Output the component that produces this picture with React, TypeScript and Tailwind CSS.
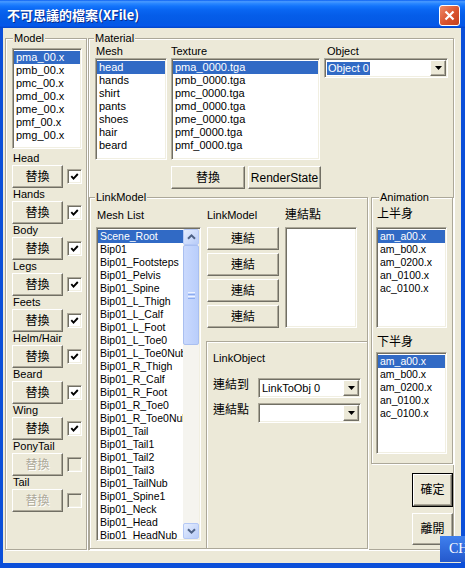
import React from "react";

const FONT = "font-['Liberation_Sans','Noto_Sans_CJK_TC',sans-serif]";
const CJK = "font-['Noto_Sans_CJK_TC','Liberation_Sans',sans-serif]";
const raised =
  "bg-[#ece9d8] border border-t-white border-l-white border-b-[#716f64] border-r-[#716f64] shadow-[inset_-1px_-1px_0_#aca899]";
const sunken =
  "border border-t-[#aca899] border-l-[#aca899] border-b-white border-r-white shadow-[inset_1px_1px_0_#716f64,inset_-1px_-1px_0_#f1efe2]";
const etched =
  "border border-[#aca899] shadow-[inset_1px_1px_0_#ffffff,1px_1px_0_#ffffff]";

function Group({
  label,
  labelLeft,
  className,
  children,
}: {
  label: string;
  labelLeft: string;
  className: string;
  children?: React.ReactNode;
}) {
  return (
    <div className={`relative ${etched} ${className}`}>
      <span
        className={`absolute top-[-7px] ${labelLeft} bg-[#ece9d8] px-[1px] text-[11px] leading-[13px] whitespace-nowrap`}
      >
        {label}
      </span>
      {children}
    </div>
  );
}

function Btn({
  className,
  children,
  disabled,
}: {
  className: string;
  children: React.ReactNode;
  disabled?: boolean;
}) {
  return (
    <div
      className={`${raised} ${className} flex items-center justify-center text-[12px] leading-[14px] whitespace-nowrap ${
        disabled ? "text-[#aca899] [text-shadow:1px_1px_0_#ffffff]" : "text-black"
      }`}
    >
      {children}
    </div>
  );
}

function Check({ checked, disabled }: { checked?: boolean; disabled?: boolean }) {
  return (
    <div
      className={`w-[15px] h-[15px] ${sunken} ${
        disabled ? "bg-[#ece9d8]" : "bg-white"
      } flex items-center justify-center`}
    >
      {checked && (
        <svg width="9" height="9" viewBox="0 0 9 9">
          <path d="M1.3 4.2 L3.5 6.6 L7.8 2" stroke="#000" strokeWidth="1.9" fill="none" />
        </svg>
      )}
    </div>
  );
}

function ListBox({
  items,
  selected,
  className,
  small,
}: {
  items: string[];
  selected?: number;
  className: string;
  small?: boolean;
}) {
  return (
    <div className={`${sunken} bg-white p-[1px] overflow-hidden ${className}`}>
      <div className="pt-[1px]">
        {items.map((it, i) => (
          <div
            key={i}
            className={`h-[13px] leading-[13px] pl-[2px] ${small ? "text-[10.5px]" : "text-[11px]"} whitespace-nowrap ${
              i === selected ? "bg-[#316ac5] text-white" : "text-black"
            }`}
          >
            {it}
          </div>
        ))}
      </div>
    </div>
  );
}

function DropBtn() {
  return (
    <div className={`${raised} w-[16px] h-[16px] flex items-center justify-center ml-auto shrink-0`}>
      <svg width="7" height="4" viewBox="0 0 7 4">
        <path d="M0 0 H7 L3.5 4 Z" fill="#000" />
      </svg>
    </div>
  );
}

function Combo({ className, children }: { className: string; children?: React.ReactNode }) {
  return (
    <div className={`${sunken} bg-white p-[1px] flex items-center ${className}`}>
      <div className="flex-1 flex items-center text-[11px] leading-[13px] whitespace-nowrap overflow-hidden">
        {children}
      </div>
      <DropBtn />
    </div>
  );
}

function SbBtn({ down }: { down?: boolean }) {
  return (
    <div className="h-[16px] w-[16px] rounded-[2px] border border-[#b4c8f6] bg-[linear-gradient(135deg,#e6eefe,#b7cbf8)] flex items-center justify-center shrink-0">
      <svg width="9" height="6" viewBox="0 0 9 6">
        <path
          d={down ? "M1 1.2 L4.5 4.6 L8 1.2" : "M1 4.8 L4.5 1.4 L8 4.8"}
          stroke="#4d6185"
          strokeWidth="2"
          fill="none"
        />
      </svg>
    </div>
  );
}

const models = ["pma_00.x", "pmb_00.x", "pmc_00.x", "pmd_00.x", "pme_00.x", "pmf_00.x", "pmg_00.x"];
const meshes = ["head", "hands", "shirt", "pants", "shoes", "hair", "beard"];
const textures = [
  "pma_0000.tga",
  "pmb_0000.tga",
  "pmc_0000.tga",
  "pmd_0000.tga",
  "pme_0000.tga",
  "pmf_0000.tga",
  "pmf_0000.tga",
];
const parts: { label: string; checked: boolean; disabled?: boolean }[] = [
  { label: "Head", checked: true },
  { label: "Hands", checked: true },
  { label: "Body", checked: true },
  { label: "Legs", checked: true },
  { label: "Feets", checked: true },
  { label: "Helm/Hair", checked: true },
  { label: "Beard", checked: true },
  { label: "Wing", checked: true },
  { label: "PonyTail", checked: false, disabled: true },
  { label: "Tail", checked: false, disabled: true },
];
const bones = [
  "Scene_Root",
  "Bip01",
  "Bip01_Footsteps",
  "Bip01_Pelvis",
  "Bip01_Spine",
  "Bip01_L_Thigh",
  "Bip01_L_Calf",
  "Bip01_L_Foot",
  "Bip01_L_Toe0",
  "Bip01_L_Toe0Nub",
  "Bip01_R_Thigh",
  "Bip01_R_Calf",
  "Bip01_R_Foot",
  "Bip01_R_Toe0",
  "Bip01_R_Toe0Nub",
  "Bip01_Tail",
  "Bip01_Tail1",
  "Bip01_Tail2",
  "Bip01_Tail3",
  "Bip01_TailNub",
  "Bip01_Spine1",
  "Bip01_Neck",
  "Bip01_Head",
  "Bip01_HeadNub",
];
const anims = ["am_a00.x", "am_b00.x", "am_0200.x", "an_0100.x", "ac_0100.x"];

export default function App() {
  return (
    <div className={`${FONT} relative w-[465px] h-[568px] bg-[#0b4fd9] flex flex-col overflow-hidden text-black`}>
      {/* Title bar */}
      <div className="h-[28px] shrink-0 flex items-start justify-between bg-[linear-gradient(to_bottom,#0a5ff2_0%,#4a9bff_6%,#2b88ff_12%,#1374fb_22%,#0966f2_35%,#055de9_55%,#0459e6_80%,#0557ea_92%,#0344c8_100%)]">
        <div
          className={`${CJK} mt-[6px] ml-[7px] text-[13px] leading-[17px] font-bold text-white [text-shadow:1px_1px_0_#0b2a8a] whitespace-nowrap`}
        >
          不可思議的檔案(XFile)
        </div>
        <div className="mt-[5px] mr-[5px] w-[21px] h-[21px] rounded-[3px] border border-white bg-[linear-gradient(135deg,#ef8a68,#d9532e_55%,#c3401d)] flex items-center justify-center">
          <svg width="11" height="11" viewBox="0 0 11 11">
            <path d="M1.5 1.5 L9.5 9.5 M9.5 1.5 L1.5 9.5" stroke="#fff" strokeWidth="2.2" />
          </svg>
        </div>
      </div>

      {/* Body */}
      <div className="flex-1 ml-[3px] mr-[4px] mb-[5px] bg-[#ece9d8] pt-[10px] pl-[2px]">
        <div className="flex">
          {/* Model */}
          <Group label="Model" labelLeft="left-[7px]" className="w-[82px] h-[512px]">
            <div className="flex flex-col">
              <ListBox items={models} selected={0} className="mt-[9px] ml-[6px] w-[70px] h-[101px]" />
              <div className="mt-[3px]">
                {parts.map((p) => (
                  <div key={p.label} className="h-[36px]">
                    <div className="h-[13px] leading-[13px] pl-[7px] text-[11px] whitespace-nowrap">
                      {p.label}
                    </div>
                    <div className="flex items-center h-[23px] pl-[6px]">
                      <Btn className="w-[51px] h-[23px]" disabled={p.disabled}>
                        替換
                      </Btn>
                      <div className="ml-[4px]">
                        <Check checked={p.checked} disabled={p.disabled} />
                      </div>
                    </div>
                  </div>
                ))}
              </div>
            </div>
          </Group>

          {/* Material */}
          <Group label="Material" labelLeft="left-[5px]" className="ml-[1px] w-[366px] h-[512px]">
            <div className="flex flex-col h-full">
              <div className="mt-[6px] flex">
                <div className="ml-[6px] w-[72px] flex flex-col">
                  <div className="h-[13px] leading-[13px] pl-[1px] text-[11px]">Mesh</div>
                  <ListBox items={meshes} selected={0} className="w-full h-[102px]" />
                </div>
                <div className="ml-[4px] w-[149px] flex flex-col">
                  <div className="h-[13px] leading-[13px] text-[11px]">Texture</div>
                  <ListBox items={textures} selected={0} className="w-full h-[102px]" />
                </div>
                <div className="ml-[4px] w-[124px] flex flex-col">
                  <div className="h-[13px] leading-[13px] pl-[3px] text-[11px]">Object</div>
                  <Combo className="w-full h-[20px]">
                    <span className="ml-[1px] px-[1px] bg-[#316ac5] text-white">Object 0</span>
                  </Combo>
                </div>
              </div>

              <div className="mt-[6px] flex h-[23px]">
                <Btn className="ml-[82px] w-[74px] h-[23px]">替換</Btn>
                <Btn className="ml-[3px] w-[73px] h-[23px] text-[11px]">RenderState</Btn>
              </div>

              <div className="mt-[8px] flex flex-1 min-h-0">
                {/* LinkModel */}
                <Group label="LinkModel" labelLeft="left-[5px]" className="w-[279px] h-full">
                  <div className="flex h-full">
                    <div className="ml-[6px] w-[105px] flex flex-col pt-[11px] pb-[7px]">
                      <div className="h-[13px] leading-[13px] pl-[1px] text-[11px]">Mesh List</div>
                      <div className={`${sunken} bg-white p-[1px] mt-[5px] flex-1 flex overflow-hidden min-h-0`}>
                        <div className="flex-1 pt-[1px] overflow-hidden">
                          {bones.map((b, i) => (
                            <div
                              key={i}
                              className={`h-[13px] leading-[13px] pl-[2px] text-[10.5px] whitespace-nowrap overflow-hidden ${
                                i === 0 ? "bg-[#316ac5] text-white" : ""
                              }`}
                            >
                              {b}
                            </div>
                          ))}
                        </div>
                        <div className="w-[16px] flex flex-col bg-[#f5f4ef]">
                          <SbBtn />
                          <div className="h-[100px] rounded-[2px] border border-[#a9bff0] bg-[linear-gradient(to_right,#cad9fd,#b9cefb)] flex flex-col items-center justify-center gap-[1px]">
                            <div className="w-[7px] h-[1px] bg-[#eef3ff]" />
                            <div className="w-[7px] h-[1px] bg-[#8cacf0]" />
                            <div className="w-[7px] h-[1px] bg-[#eef3ff]" />
                            <div className="w-[7px] h-[1px] bg-[#8cacf0]" />
                          </div>
                          <div className="flex-1" />
                          <SbBtn down />
                        </div>
                      </div>
                    </div>

                    <div className="ml-[5px] flex-1 flex flex-col">
                      <div className="flex pt-[11px]">
                        <div className="ml-[1px] w-[72px] flex flex-col">
                          <div className="h-[13px] leading-[13px] text-[11px]">LinkModel</div>
                          <div className="mt-[5px] flex flex-col gap-[3px]">
                            {[0, 1, 2, 3].map((k) => (
                              <Btn key={k} className="w-[72px] h-[23px]">
                                連結
                              </Btn>
                            ))}
                          </div>
                        </div>
                        <div className="ml-[6px] w-[72px] flex flex-col">
                          <div className="h-[13px] leading-[13px] text-[12px]">連結點</div>
                          <ListBox items={[]} className="mt-[5px] w-full h-[101px]" />
                        </div>
                      </div>
                      <div className="mt-[13px] flex-1 border-t border-l border-[#aca899] shadow-[inset_1px_1px_0_#ffffff] pl-[6px] pt-[10px]">
                        <div className="h-[13px] leading-[13px] text-[11px]">LinkObject</div>
                        <div className="mt-[13px] flex items-start">
                          <div className="w-[45px] leading-[14px] text-[12px]">連結到</div>
                          <Combo className="w-[103px] h-[20px]">
                            <span className="ml-[2px]">LinkToObj 0</span>
                          </Combo>
                        </div>
                        <div className="mt-[5px] flex items-start">
                          <div className="w-[45px] leading-[14px] text-[12px]">連結點</div>
                          <Combo className="w-[103px] h-[20px]" />
                        </div>
                      </div>
                    </div>
                  </div>
                </Group>

                {/* Right column */}
                <div className="ml-[3px] w-[82px] flex flex-col">
                  <Group label="Animation" labelLeft="left-[7px]" className="w-[82px] h-[267px]">
                    <div className="flex flex-col">
                      <div className="pl-[5px] pt-[10px] h-[23px] leading-[13px] text-[12px]">上半身</div>
                      <ListBox items={anims} selected={0} small className="mt-[6px] ml-[4px] w-[71px] h-[101px]" />
                      <div className="pl-[5px] mt-[8px] h-[13px] leading-[13px] text-[12px]">下半身</div>
                      <ListBox items={anims} selected={0} small className="mt-[3px] ml-[4px] w-[71px] h-[102px]" />
                    </div>
                  </Group>
                  <div className="mt-[9px] self-end w-[41px] h-[34px] border border-black">
                    <Btn className="w-full h-full">確定</Btn>
                  </div>
                  <Btn className="mt-[6px] self-end w-[41px] h-[32px]">離開</Btn>
                </div>
              </div>
            </div>
          </Group>
        </div>
      </div>

      {/* Language bar indicator */}
      <div className="absolute left-[440px] top-[536px] w-[25px] h-[26px] bg-[linear-gradient(to_bottom,#3f80ee,#2458cc)] flex items-center">
        <div className="ml-[3px] w-[3px] h-[18px] bg-[radial-gradient(circle,#a9c6ff_40%,transparent_45%)] bg-[length:3px_3px]" />
        <span className="ml-[6px] font-['Liberation_Serif',serif] text-[14px] leading-[16px] text-white whitespace-nowrap">
          CH
        </span>
      </div>
    </div>
  );
}
